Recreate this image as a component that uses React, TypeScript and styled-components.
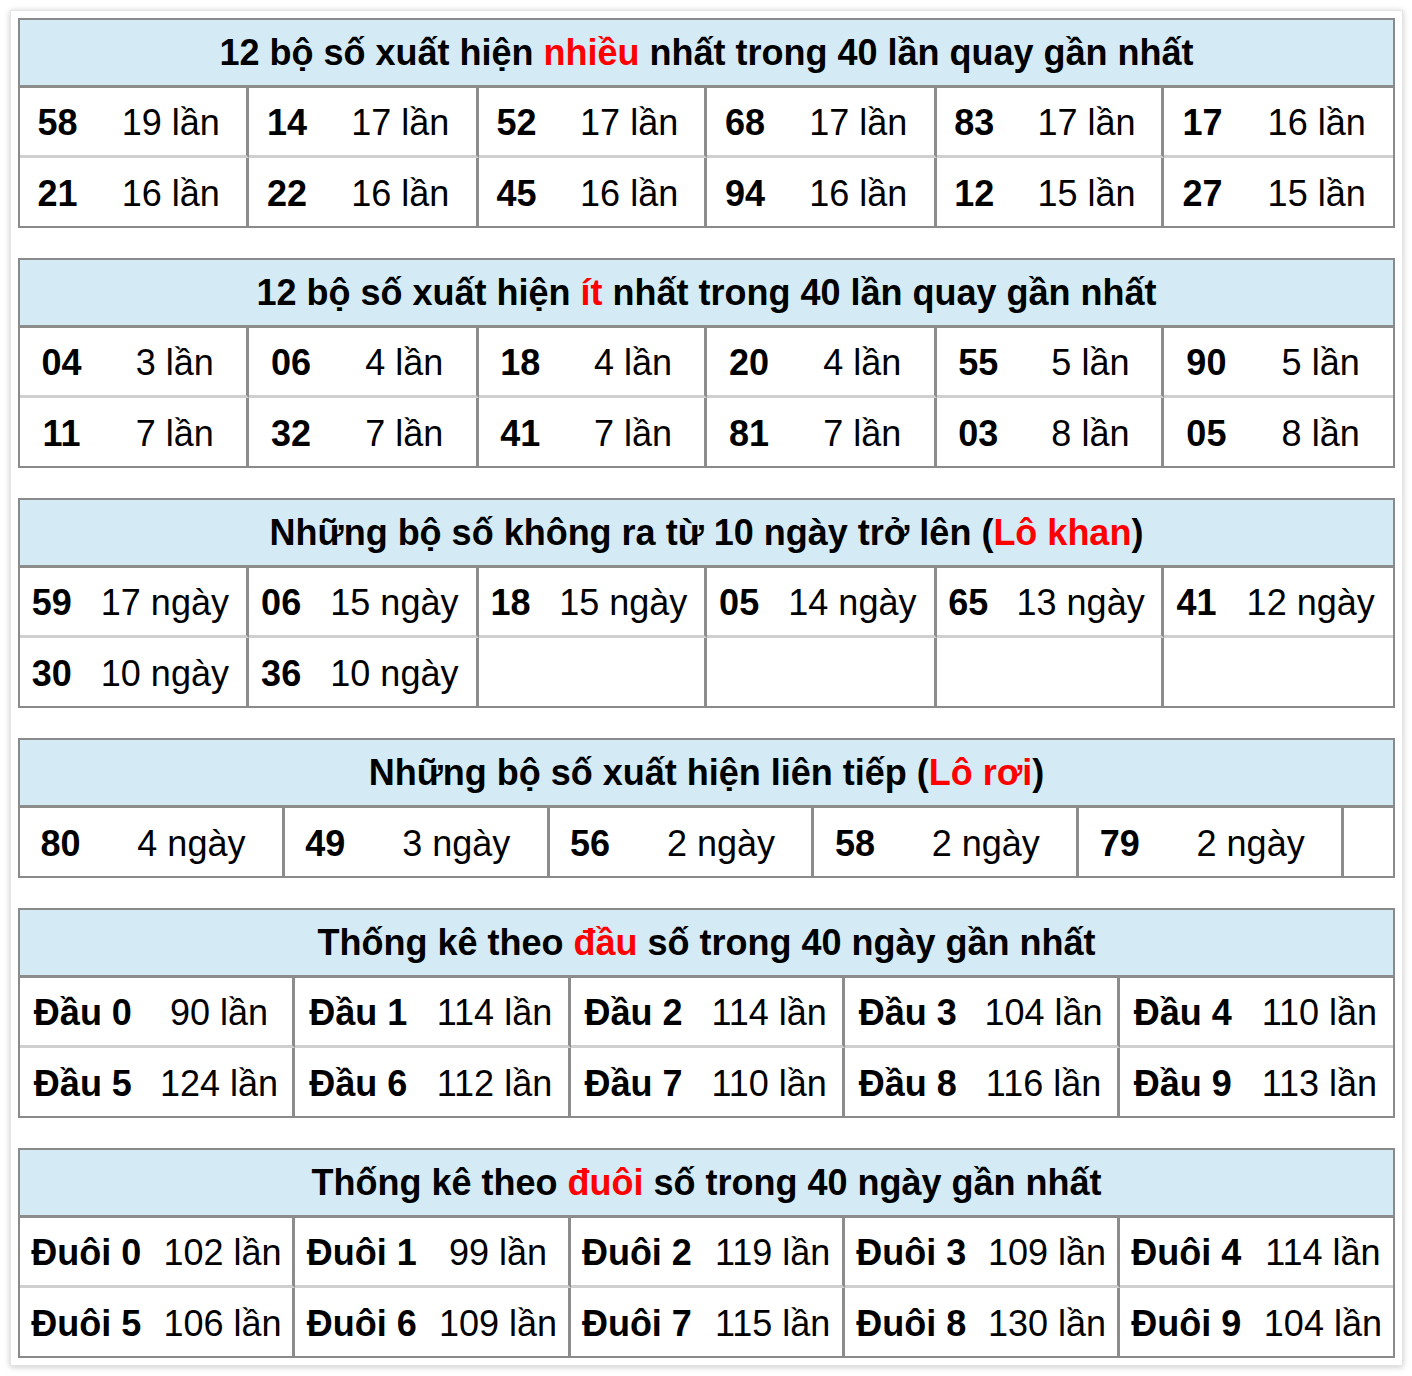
import React from "react";
import styled, { createGlobalStyle } from "styled-components";

type Pair = [string, string] | null;

type Section = {
  before: string;
  red: string;
  after: string;
  cols: string;
  rows: Pair[][];
  tail?: boolean;
};

const sections: Section[] = [
  {
    before: "12 bộ số xuất hiện ",
    red: "nhiều",
    after: " nhất trong 40 lần quay gần nhất",
    cols: "230fr 230fr 229fr 230fr 228fr 229fr",
    rows: [
      [["58", "19 lần"], ["14", "17 lần"], ["52", "17 lần"], ["68", "17 lần"], ["83", "17 lần"], ["17", "16 lần"]],
      [["21", "16 lần"], ["22", "16 lần"], ["45", "16 lần"], ["94", "16 lần"], ["12", "15 lần"], ["27", "15 lần"]],
    ],
  },
  {
    before: "12 bộ số xuất hiện ",
    red: "ít",
    after: " nhất trong 40 lần quay gần nhất",
    cols: "230fr 230fr 229fr 230fr 228fr 229fr",
    rows: [
      [["04", "3 lần"], ["06", "4 lần"], ["18", "4 lần"], ["20", "4 lần"], ["55", "5 lần"], ["90", "5 lần"]],
      [["11", "7 lần"], ["32", "7 lần"], ["41", "7 lần"], ["81", "7 lần"], ["03", "8 lần"], ["05", "8 lần"]],
    ],
  },
  {
    before: "Những bộ số không ra từ 10 ngày trở lên (",
    red: "Lô khan",
    after: ")",
    cols: "230fr 230fr 229fr 230fr 228fr 229fr",
    rows: [
      [["59", "17 ngày"], ["06", "15 ngày"], ["18", "15 ngày"], ["05", "14 ngày"], ["65", "13 ngày"], ["41", "12 ngày"]],
      [["30", "10 ngày"], ["36", "10 ngày"], null, null, null, null],
    ],
  },
  {
    before: "Những bộ số xuất hiện liên tiếp (",
    red: "Lô rơi",
    after: ")",
    cols: "repeat(5, 265fr) 49fr",
    tail: true,
    rows: [[["80", "4 ngày"], ["49", "3 ngày"], ["56", "2 ngày"], ["58", "2 ngày"], ["79", "2 ngày"]]],
  },
  {
    before: "Thống kê theo ",
    red: "đầu",
    after: " số trong 40 ngày gần nhất",
    cols: "276fr 276fr 275fr 275fr 274fr",
    rows: [
      [["Đầu 0", "90 lần"], ["Đầu 1", "114 lần"], ["Đầu 2", "114 lần"], ["Đầu 3", "104 lần"], ["Đầu 4", "110 lần"]],
      [["Đầu 5", "124 lần"], ["Đầu 6", "112 lần"], ["Đầu 7", "110 lần"], ["Đầu 8", "116 lần"], ["Đầu 9", "113 lần"]],
    ],
  },
  {
    before: "Thống kê theo ",
    red: "đuôi",
    after: " số trong 40 ngày gần nhất",
    cols: "276fr 276fr 275fr 275fr 274fr",
    rows: [
      [["Đuôi 0", "102 lần"], ["Đuôi 1", "99 lần"], ["Đuôi 2", "119 lần"], ["Đuôi 3", "109 lần"], ["Đuôi 4", "114 lần"]],
      [["Đuôi 5", "106 lần"], ["Đuôi 6", "109 lần"], ["Đuôi 7", "115 lần"], ["Đuôi 8", "130 lần"], ["Đuôi 9", "104 lần"]],
    ],
  },
];

// share of each pair column taken by the number, per table
const numShare = [76 / 229, 84 / 229, 64 / 229, 82 / 265, 127 / 275, 134 / 275];

const App = () => {
  return (
    <>
      <GlobalStyle />
      <Frame>
        {sections.map((s, si) => (
          <StatTable key={si} $cols={s.cols}>
            <Title>
              <span>
                {s.before}
                <Red>{s.red}</Red>
                {s.after}
              </span>
            </Title>
            {s.rows.map((row, ri) => {
              const last = ri === s.rows.length - 1;
              return (
                <React.Fragment key={ri}>
                  {row.map((pair, pi) => {
                    const divider = pi < row.length - 1 || !!s.tail;
                    return (
                      <PairCell
                        key={pi}
                        $last={last}
                        $divider={divider}
                        style={{ gridTemplateColumns: `${numShare[si]}fr ${1 - numShare[si]}fr` }}
                      >
                        <Num>{pair ? pair[0] : ""}</Num>
                        <Count>{pair ? pair[1] : ""}</Count>
                      </PairCell>
                    );
                  })}
                  {s.tail && <PairCell $last={last} $divider={false} />}
                </React.Fragment>
              );
            })}
          </StatTable>
        ))}
      </Frame>
    </>
  );
};

const GlobalStyle = createGlobalStyle`
  html, body {
    margin: 0;
    padding: 0;
    background: #fff;
  }
  body {
    font-family: "Liberation Sans", Arial, Helvetica, sans-serif;
    color: #000;
  }
`;

const Frame = styled.div`
  margin: 10px 9px 10px 10px;
  padding: 7px;
  background: #fff;
  border: 1px solid #e4e4e4;
  box-shadow: 0 1px 6px rgba(0, 0, 0, 0.22);
  display: flex;
  flex-direction: column;
  gap: 30px;
`;

const StatTable = styled.div<{ $cols: string }>`
  display: grid;
  grid-template-columns: ${(p) => p.$cols};
  border: 2px solid #8a8a8a;
  background: #fff;
`;

const Title = styled.div`
  grid-column: 1 / -1;
  box-sizing: border-box;
  height: 68px;
  display: flex;
  align-items: center;
  justify-content: center;
  background: #d4ebf6;
  border-bottom: 3px solid #8c8c8c;
  font-size: 36px;
  font-weight: 700;
  white-space: pre;
`;

const Red = styled.span`
  color: #ff0000;
`;

const PairCell = styled.div<{ $last: boolean; $divider: boolean }>`
  box-sizing: border-box;
  min-width: 0;
  display: grid;
  height: ${(p) => (p.$last ? 68 : 70)}px;
  padding-top: 3px;
  border-bottom: ${(p) => (p.$last ? "none" : "3px solid #cfcfcf")};
  border-right: ${(p) => (p.$divider ? "3px solid #8c8c8c" : "none")};
`;

const Num = styled.div`
  display: flex;
  align-items: center;
  justify-content: center;
  font-size: 36px;
  font-weight: 700;
  white-space: nowrap;
`;

const Count = styled(Num)`
  font-weight: 400;
`;

export default App;
